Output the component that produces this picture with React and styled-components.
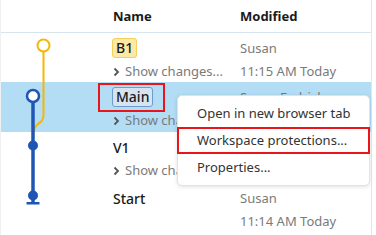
import React from "react";
import styled, { createGlobalStyle } from "styled-components";

const GlobalStyle = createGlobalStyle`
  html, body {
    margin: 0;
    padding: 0;
    background: #ffffff;
  }
  body {
    font-family: "Noto Sans", "Open Sans", sans-serif;
    font-size: 13px;
    color: #222;
  }
`;

const Page = styled.div`
  position: relative;
  width: 376px;
  height: 235px;
  overflow: hidden;
  background: #fff;
`;

const Table = styled.div`
  width: 372px;
  border-right: 1px solid #e4e8ec;
  border-left: 1px solid #eef0f2;
  box-sizing: border-box;
`;

const Columns = `
  display: grid;
  grid-template-columns: 112px 127px 1fr;
`;

const HeaderRow = styled.div`
  ${Columns}
  height: 32px;
  align-items: center;
  border-bottom: 1px solid #d6e4f0;
  font-weight: 700;
  color: #1a1a1a;
`;

const Body = styled.div`
  position: relative;
`;

const Row = styled.div`
  ${Columns}
  height: ${(p) => p.h}px;
  background: ${(p) => (p.selected ? "#b3dcf5" : "transparent")};
  box-sizing: border-box;
  padding-top: 4px;
`;

const Cell = styled.div`
  display: flex;
  flex-direction: column;
  white-space: nowrap;
  line-height: 23px;
  min-width: 0;
`;

const Badge = styled.span`
  align-self: flex-start;
  position: relative;
  display: inline-block;
  font-size: 14px;
  font-weight: 500;
  line-height: 18px;
  padding: 0 3px;
  border-radius: 3px;
  border: 1px solid ${(p) => (p.tone === "main" ? "#6f9ccf" : "#f3cf5e")};
  background: ${(p) => (p.tone === "main" ? "#d6e4f2" : "#fde9a6")};
  color: #1a1a1a;
  margin: 1px 0 2px -1px;
`;

const Name = styled.span`
  font-size: 14px;
  font-weight: 500;
  line-height: 23px;
  color: #1a1a1a;
`;

const Changes = styled.span`
  display: flex;
  align-items: center;
  gap: 5px;
  color: #7a7a7a;
`;

const Muted = styled.span`
  color: #7a7a7a;
`;

const Callout = styled.span`
  position: absolute;
  left: -15px;
  top: -5px;
  right: -13px;
  bottom: -6px;
  border: 2px solid #e8151b;
  pointer-events: none;
`;

const Graph = styled.svg`
  position: absolute;
  left: 0;
  top: 0;
`;

const Menu = styled.div`
  position: absolute;
  left: 177px;
  top: 95px;
  width: 193px;
  padding: 4px 0;
  background: #fff;
  border: 1px solid #e2e2e2;
  border-radius: 5px;
  box-shadow: 0 1px 4px rgba(0, 0, 0, 0.12);
  box-sizing: border-box;
`;

const MenuItem = styled.div`
  position: relative;
  height: 27px;
  line-height: 27px;
  padding-left: 19px;
  color: #333;
  white-space: nowrap;
  ${(p) =>
    p.marked &&
    `
    outline: 2px solid #e8151b;
    outline-offset: -2px;
    margin: 0 -1px;
    padding-left: 20px;
  `}
`;

const Chevron = () => (
  <svg width="7" height="10" viewBox="0 0 7 10">
    <path d="M1.5 1.5 L5 5 L1.5 8.5" fill="none" stroke="#555" strokeWidth="1.8" />
  </svg>
);

const rows = [
  { h: 49, badge: "B1", tone: "b1", changes: true, user: "Susan", time: "11:15 AM Today" },
  { h: 50, badge: "Main", tone: "main", changes: true, selected: true, user: "Susan Fedrick" },
  { h: 51, name: "V1", changes: true },
  { h: 52, name: "Start", user: "Susan", time: "11:14 AM Today" },
];

export default function App() {
  return (
    <Page>
      <GlobalStyle />
      <Table>
        <HeaderRow>
          <span />
          <span>Name</span>
          <span>Modified</span>
        </HeaderRow>
        <Body>
          {rows.map((r, i) => (
            <Row key={i} h={r.h} selected={r.selected}>
              <span />
              <Cell>
                {r.badge ? (
                  <Badge tone={r.tone}>
                    {r.badge}
                    {r.tone === "main" && <Callout />}
                  </Badge>
                ) : (
                  <Name>{r.name}</Name>
                )}
                {r.changes && (
                  <Changes>
                    <Chevron />
                    Show changes...
                  </Changes>
                )}
              </Cell>
              <Cell>
                {r.user && <Muted>{r.user}</Muted>}
                {r.time && <Muted>{r.time}</Muted>}
              </Cell>
            </Row>
          ))}
          <Graph width="80" height="203" viewBox="0 0 80 203">
            <path
              d="M42.5 19 V82 Q42.5 88 37 91 Q33 94 32.5 100"
              fill="none"
              stroke="#f5b800"
              strokeWidth="2"
            />
            <circle cx="42.5" cy="12.5" r="6" fill="#fff" stroke="#f5b800" strokeWidth="2" />
            <path d="M32 69 V170" stroke="#1f56b4" strokeWidth="3.5" />
            <circle cx="32" cy="63" r="6" fill="#fff" stroke="#1f56b4" strokeWidth="2.5" />
            <circle cx="32" cy="112.5" r="5" fill="#1f56b4" />
            <circle cx="32" cy="162.5" r="5" fill="#1f56b4" />
            <rect x="25.5" y="169" width="13" height="2.5" fill="#1f56b4" />
          </Graph>
        </Body>
      </Table>
      <Menu>
        <MenuItem>Open in new browser tab</MenuItem>
        <MenuItem marked>Workspace protections...</MenuItem>
        <MenuItem>Properties...</MenuItem>
      </Menu>
    </Page>
  );
}
